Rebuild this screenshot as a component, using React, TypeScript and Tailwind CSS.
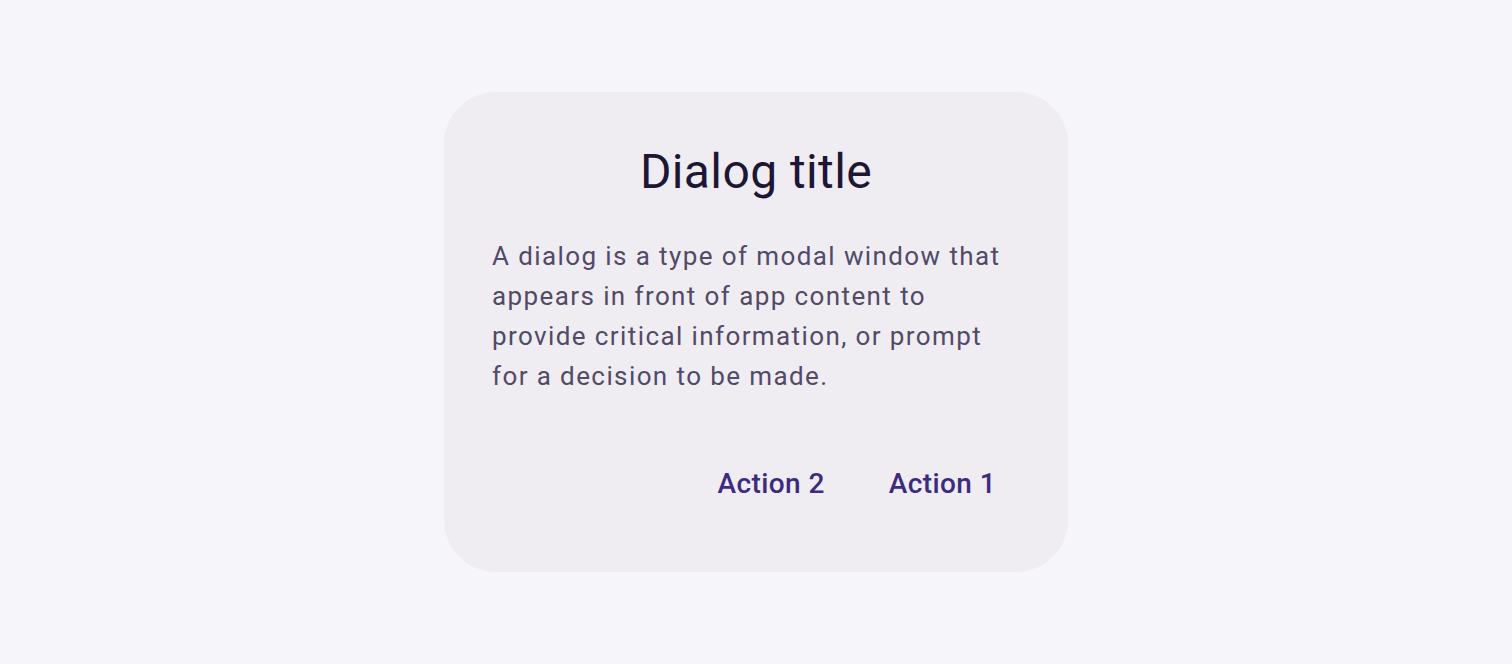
import React from "react";

export default function App() {
  return (
    <div
      className="w-[1512px] h-[664px] bg-[#f6f5fa] flex items-start justify-center pt-[92px]"
      style={{ fontFamily: "Roboto, 'Liberation Sans', sans-serif" }}
    >
      <div className="w-[624px] h-[480px] rounded-[52px] bg-[#efedf2] p-[48px] flex flex-col">
        <h1 className="text-[48px] leading-[64px] text-center text-[#1d1635] font-normal tracking-[0.4px]">
          Dialog title
        </h1>
        <p className="mt-[32px] text-[26px] leading-[40px] tracking-[1.4px] text-[#524a66]">
          A dialog is a type of modal window that appears in front of app content to provide critical information, or prompt for a decision to be made.
        </p>
        <div className="mt-[48px] flex justify-end gap-[16px]">
          <button className="h-[80px] px-[24px] text-[28px] font-medium text-[#3d2b7f] tracking-[0.4px]">
            Action 2
          </button>
          <button className="h-[80px] px-[24px] text-[28px] font-medium text-[#3d2b7f] tracking-[0.4px]">
            Action 1
          </button>
        </div>
      </div>
    </div>
  );
}
